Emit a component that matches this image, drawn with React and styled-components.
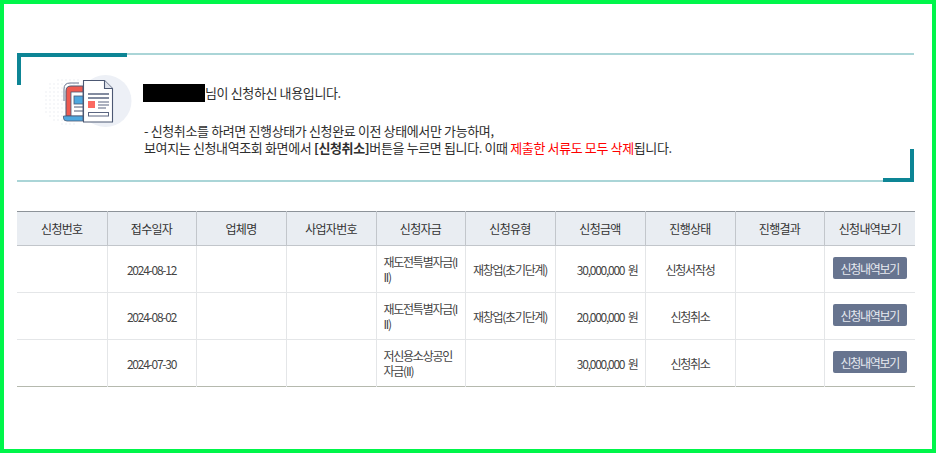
import React from 'react';
import styled, { createGlobalStyle } from 'styled-components';

const Global = createGlobalStyle`
  html, body { margin: 0; padding: 0; background: #fff; }
  body { font-family: "Noto Sans CJK KR", "Noto Sans", sans-serif; color: #333; }
`;

const Frame = styled.div`
  box-sizing: border-box;
  width: 936px;
  height: 453px;
  border: 4px solid #00f64a;
  padding: 49px 17px 0 13px;
  overflow: hidden;
`;

const Notice = styled.section`
  position: relative;
  box-sizing: border-box;
  height: 129px;
  width: 897px;
  border-top: 2px solid #aad5d7;
  border-bottom: 2px solid #aad5d7;
  display: flex;
  align-items: flex-start;
  padding: 19px 0 0 27px;
`;

const CornerTL = styled.span`
  position: absolute;
  left: 0;
  top: -2px;
  width: 110px;
  height: 32px;
  box-sizing: border-box;
  border-top: 4px solid #0d8595;
  border-left: 4px solid #0d8595;
`;

const CornerBR = styled.span`
  position: absolute;
  right: 0;
  bottom: -2px;
  width: 31px;
  height: 33px;
  box-sizing: border-box;
  border-bottom: 4px solid #0d8595;
  border-right: 4px solid #0d8595;
`;

const IconWrap = styled.div`
  width: 90px;
  height: 56px;
  flex: none;
`;

const Message = styled.div`
  margin-left: 9px;
  font-size: 13px;
  line-height: 17px;
  letter-spacing: -0.37px;
  color: #2e2e2e;
`;

const Greeting = styled.p`
  margin: 10px 0 20px;
  height: 18px;
  display: flex;
  align-items: flex-start;
  span { white-space: pre; line-height: 18px; }
`;

const Redacted = styled.span`
  display: inline-block;
  width: 62px;
  height: 18px;
  background: #000;
`;

const Guide = styled.p`
  margin: 0;
  padding-left: 1px;
  white-space: nowrap;
  line-height: 17px;
`;

const Danger = styled.span`
  color: #f00;
`;

const Table = styled.table`
  margin-top: 29px;
  width: 898px;
  border-collapse: collapse;
  table-layout: fixed;
  border-top: 1px solid #8d9399;
  border-bottom: 1px solid #b5b9ae;
  font-size: 12px;
`;

const Th = styled.th`
  height: 33px;
  padding: 0;
  background: #e9edf2;
  font-weight: 400;
  color: #333;
  letter-spacing: -0.7px;
  border-left: 1px solid #c2c6cb;
  border-bottom: 1px solid #c2c6cb;
  &:first-child { border-left: 0; }
`;

const Td = styled.td`
  height: 46px;
  padding: 0 ${p => (p.$align === 'right' ? '7px' : '7px')} 0 7px;
  color: #444;
  line-height: 15px;
  letter-spacing: -1.25px;
  word-spacing: 2px;
  text-align: ${p => p.$align || 'center'};
  word-break: break-all;
  border-left: 1px solid #e4e6e8;
  border-bottom: 1px solid #e4e6e8;
  &:first-child { border-left: 0; }
  tr:last-child & { border-bottom: 0; }
`;

const ViewButton = styled.button`
  display: block;
  margin: -2px auto 0;
  width: 74px;
  height: 22px;
  padding: 0;
  border: 0;
  border-radius: 2px;
  background: #67748f;
  color: #e6e9ef;
  font: inherit;
  letter-spacing: -1.25px;
`;

const widths = [90, 89, 90, 90, 89, 90, 90, 90, 89, 91];
const heads = ['신청번호', '접수일자', '업체명', '사업자번호', '신청자금', '신청유형', '신청금액', '진행상태', '진행결과', '신청내역보기'];
const rows = [
  { date: '2024-08-12', fund: '재도전특별자금(III)', type: '재창업(초기단계)', amount: '30,000,000 원', state: '신청서작성' },
  { date: '2024-08-02', fund: '재도전특별자금(III)', type: '재창업(초기단계)', amount: '20,000,000 원', state: '신청취소' },
  { date: '2024-07-30', fund: '저신용소상공인자금(II)', type: '', amount: '30,000,000 원', state: '신청취소' },
];

const DocIcon = () => {
  const dots = [];
  for (let y = 2; y < 52; y += 4) {
    for (let x = 2; x < 42; x += 4) {
      const d = Math.hypot(x - 24, y - 27);
      if (d < 25) dots.push(<circle key={`${x}-${y}`} cx={x} cy={y} r="0.7" fill="#e6e9ef" />);
    }
  }
  return (
    <svg width="90" height="56" viewBox="0 0 90 56" fill="none">
      {dots}
      <circle cx="61.500" cy="27" r="26" fill="#edf0f6" />
      <path d="M22 42V17q0-5 5-5h12v30z" fill="#ef5a50" stroke="#4c5873" strokeWidth="1" />
      <rect x="27" y="18" width="12" height="24" fill="#fff" stroke="#4c5873" strokeWidth="0.8" />
      <rect x="30" y="22" width="9" height="8" fill="#4ea8df" stroke="#4c5873" strokeWidth="0.8" />
      <path d="M30 33h9M30 37h9" stroke="#4c5873" strokeWidth="1" />
      <path d="M19.500 42H39v5H23q-3.500 0-3.500-3z" fill="#4ea8df" stroke="#4c5873" strokeWidth="0.8" />
      <path d="M20 27V15q0-6 6-6h9" stroke="#69758f" strokeWidth="1" />
      <path d="M39.500 6.500h21l8 8v33.500h-29z" fill="#fff" stroke="#4c5873" strokeWidth="1.1" />
      <path d="M60.500 6.500v8h8" fill="#dfe3ec" stroke="#4c5873" strokeWidth="1.1" />
      <path d="M44 20h21M44 24h21" stroke="#5a6580" strokeWidth="1.3" />
      <rect x="44" y="27" width="7" height="7" fill="#fb6a62" />
      <path d="M54 28h11M54 31h11M54 34h8" stroke="#5a6580" strokeWidth="1.1" />
      <rect x="44.500" y="38.500" width="20" height="3.500" fill="#fff" stroke="#5a6580" strokeWidth="1" />
    </svg>
  );
};

export default function App() {
  return (
    <>
      <Global />
      <Frame>
        <Notice>
          <CornerTL />
          <CornerBR />
          <IconWrap><DocIcon /></IconWrap>
          <Message>
            <Greeting><Redacted /><span>님이 신청하신 내용입니다.</span></Greeting>
            <Guide>
              - 신청취소를 하려면 진행상태가 신청완료 이전 상태에서만 가능하며,<br />
              보여지는 신청내역조회 화면에서 <b>[신청취소]</b>버튼을 누르면 됩니다. 이때 <Danger>제출한 서류도 모두 삭제</Danger>됩니다.
            </Guide>
          </Message>
        </Notice>
        <Table>
          <colgroup>
            {widths.map((w, i) => <col key={i} style={{ width: w }} />)}
          </colgroup>
          <thead>
            <tr>{heads.map(h => <Th key={h}>{h}</Th>)}</tr>
          </thead>
          <tbody>
            {rows.map(r => (
              <tr key={r.date}>
                <Td />
                <Td>{r.date}</Td>
                <Td />
                <Td />
                <Td $align="left">{r.fund}</Td>
                <Td>{r.type}</Td>
                <Td $align="right">{r.amount}</Td>
                <Td>{r.state}</Td>
                <Td />
                <Td><ViewButton>신청내역보기</ViewButton></Td>
              </tr>
            ))}
          </tbody>
        </Table>
      </Frame>
    </>
  );
}
